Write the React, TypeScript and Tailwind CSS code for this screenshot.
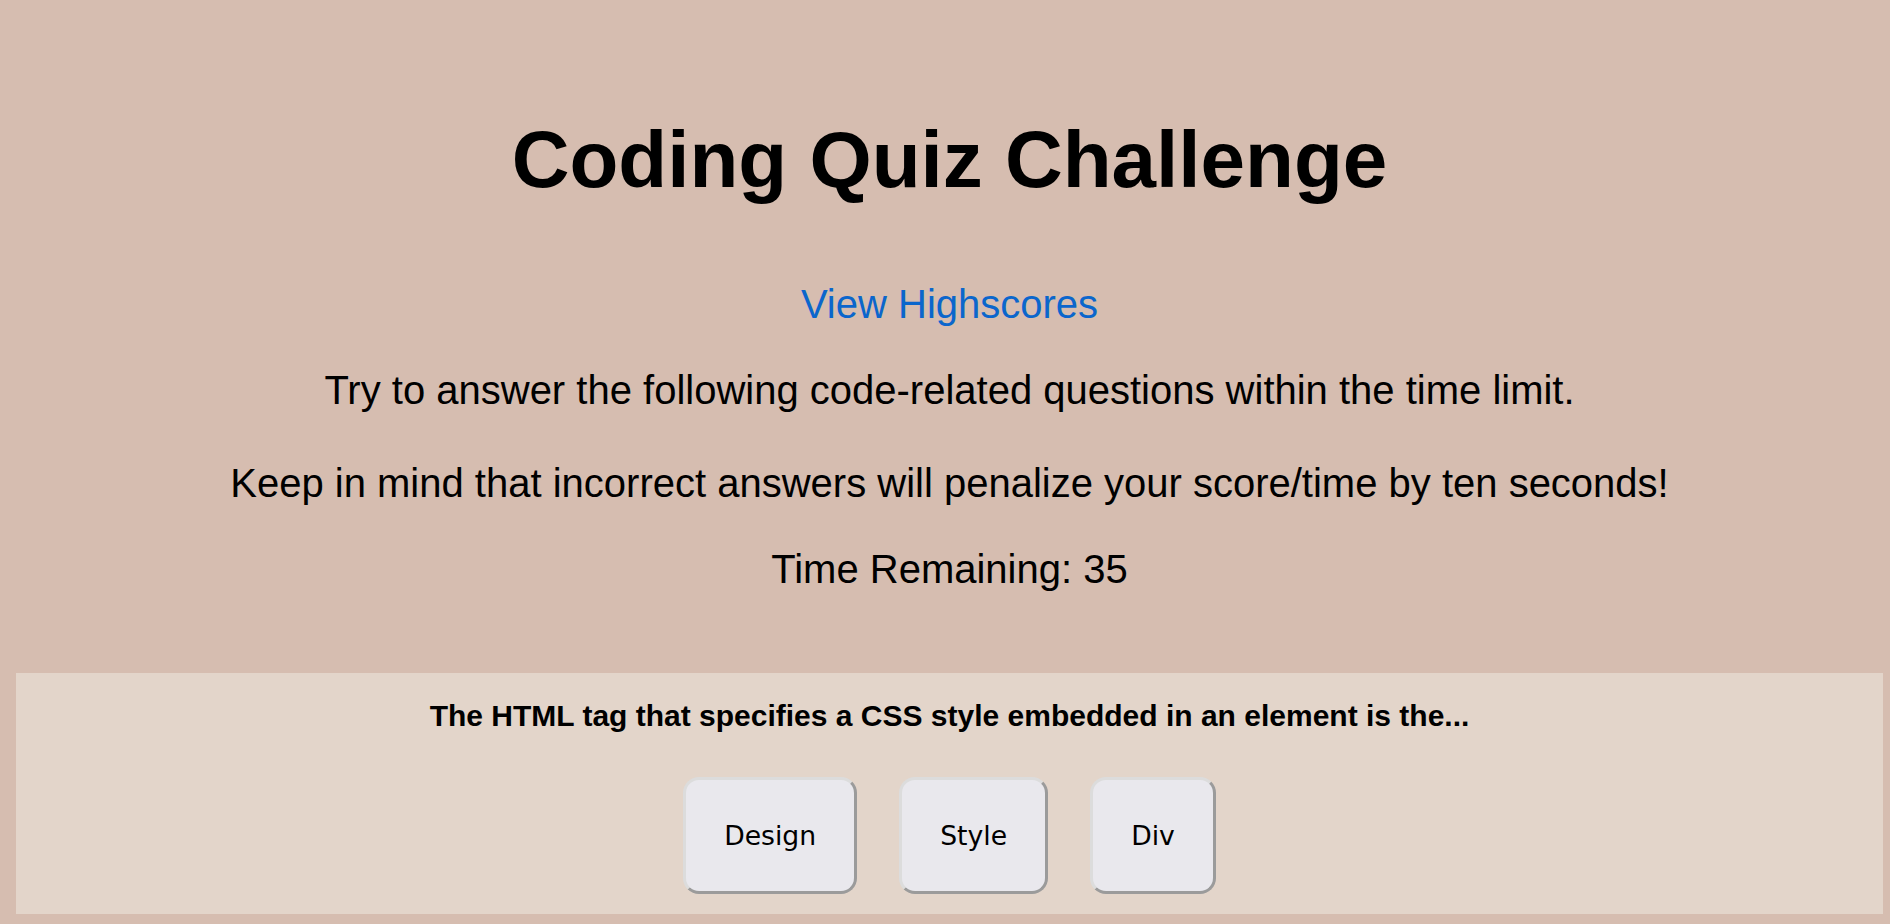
const answers = ['Design', 'Style', 'Div']

export default function App() {
  return (
    <div className="min-h-screen bg-[#d6bdb0] pl-4 pr-[7px] pt-[114px] pb-3 text-black font-['Liberation_Sans',Arial,sans-serif]">
      {/* Header */}
      <header className="text-center">
        <h1 className="text-[80px] leading-[92px] font-bold">Coding Quiz Challenge</h1>
        <a href="#" className="block mt-[75px] text-[40px] leading-[46px] text-[#0b66cc]">
          View Highscores
        </a>
        <p className="mt-[40px] text-[40px] leading-[46px]">
          Try to answer the following code-related questions within the time limit.
        </p>
        <p className="mt-[47px] text-[40px] leading-[46px]">
          Keep in mind that incorrect answers will penalize your score/time by ten seconds!
        </p>
        <p className="mt-[40px] text-[40px] leading-[46px]">Time Remaining: 35</p>
      </header>

      {/* Question */}
      <section className="mt-[81px] bg-[#e3d5ca] pt-[25px] pb-[20px] text-center">
        <h2 className="text-[30px] leading-[35px] font-bold">
          The HTML tag that specifies a CSS style embedded in an element is the...
        </h2>
        <div className="mt-[44px] flex justify-center gap-[42px]">
          {answers.map((answer) => (
            <button
              key={answer}
              className="rounded-[16px] border-[3px] border-t-[#dcdcdc] border-l-[#dcdcdc] border-b-[#9b9b9b] border-r-[#9b9b9b] bg-[#e9e8ed] px-[38px] pt-[40px] pb-[39px] text-[26.67px] leading-[32px] text-black font-['DejaVu_Sans',sans-serif]"
            >
              {answer}
            </button>
          ))}
        </div>
      </section>
    </div>
  )
}
